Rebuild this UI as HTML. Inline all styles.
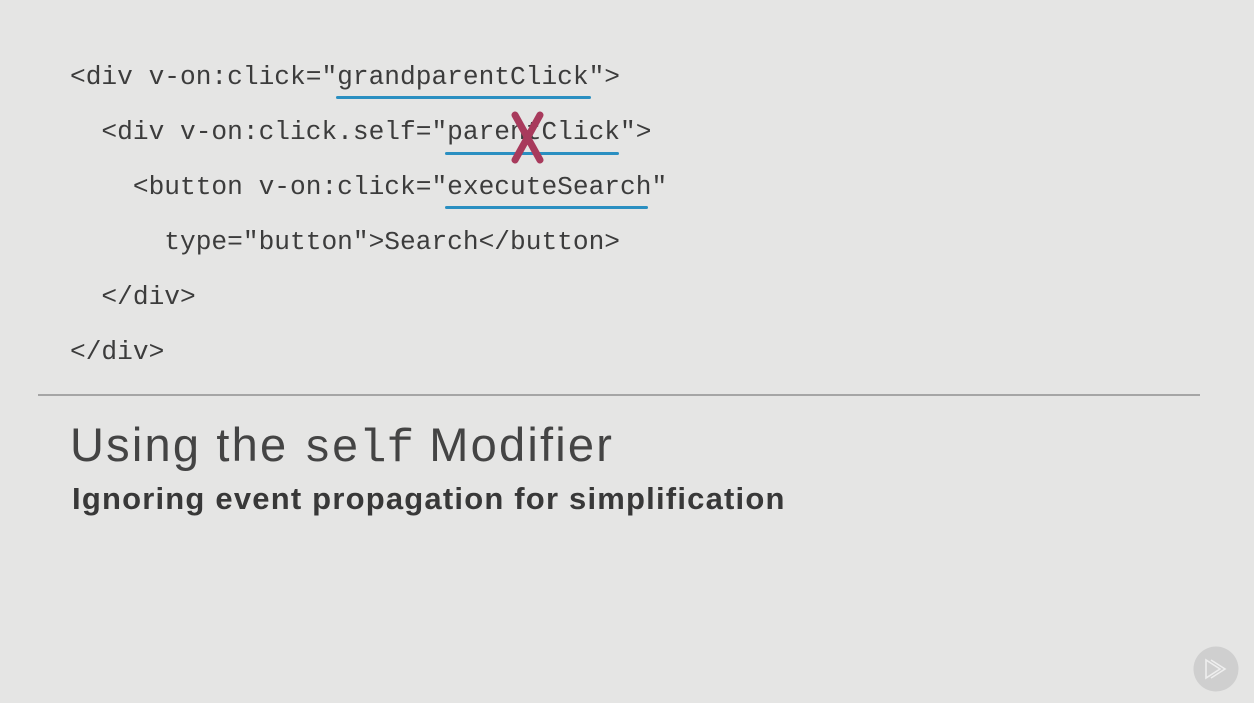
<!DOCTYPE html>
<html><head><meta charset="utf-8"><style>
html,body{margin:0;padding:0;}
body{width:1254px;height:703px;background:#e5e5e4;position:relative;overflow:hidden;font-family:"Liberation Sans",sans-serif;}
.code{position:absolute;left:70px;font-family:"Liberation Mono",monospace;font-size:26.2px;color:#3c3c3c;white-space:pre;line-height:30px;}
.ul{position:absolute;height:3px;background:#2a8fc1;border-radius:2px;}
.hr{position:absolute;left:38px;top:394px;width:1162px;height:2px;background:#a5a5a5;}
.t{position:absolute;left:70px;top:417px;font-size:47px;color:#444;font-weight:normal;letter-spacing:2.2px;white-space:nowrap;}
.t .m{font-family:"Liberation Mono",monospace;font-size:46px;letter-spacing:0;}
.s{position:absolute;left:72px;top:481px;font-size:31px;font-weight:bold;color:#383838;white-space:nowrap;letter-spacing:1.2px;}
</style></head><body>
<div class="code" style="top:62px">&lt;div v-on:click="grandparentClick"&gt;</div>
<div class="code" style="top:117px">  &lt;div v-on:click.self="parentClick"&gt;</div>
<div class="code" style="top:172px">    &lt;button v-on:click="executeSearch"</div>
<div class="code" style="top:227px">      type="button"&gt;Search&lt;/button&gt;</div>
<div class="code" style="top:282px">  &lt;/div&gt;</div>
<div class="code" style="top:337px">&lt;/div&gt;</div>
<div class="ul" style="left:336px;top:96px;width:255px"></div>
<div class="ul" style="left:445px;top:152px;width:174px"></div>
<div class="ul" style="left:445px;top:206px;width:203px"></div>
<svg style="position:absolute;left:505px;top:110px" width="45" height="55"><path d="M10 5 L35 50 M35 5 L10 50" stroke="#a83a5c" stroke-width="7" stroke-linecap="round"/></svg>
<div class="hr"></div>
<div class="t">Using the <span class="m">self</span> Modifier</div>
<div class="s">Ignoring event propagation for simplification</div>
<svg style="position:absolute;left:1193px;top:646px" width="46" height="46"><circle cx="23" cy="23" r="22.5" fill="#cfcfcf"/><path d="M13 14 L13 32 L27 23 Z M18 14 L32 23 L18 32" fill="none" stroke="#eeeeee" stroke-width="1.6"/></svg>
</body></html>
